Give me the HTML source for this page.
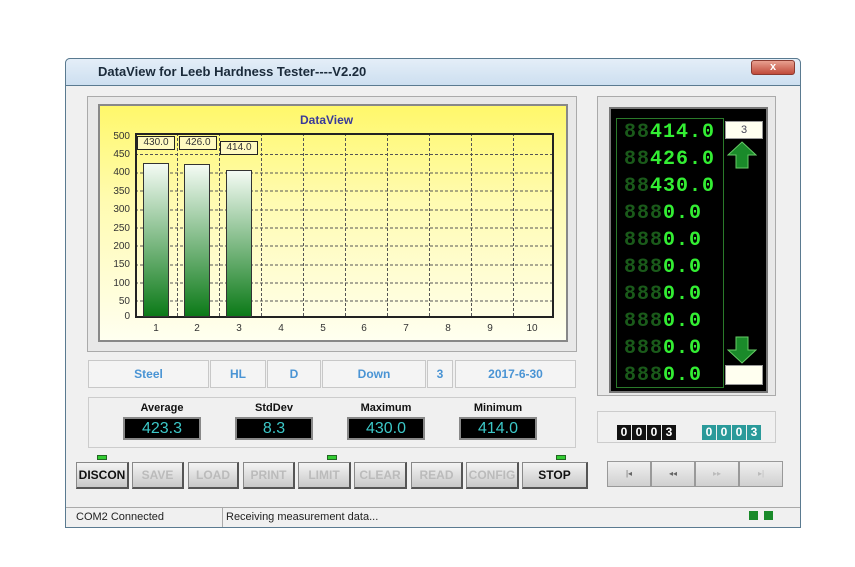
<!DOCTYPE html><html><head><style>
*{margin:0;padding:0;box-sizing:border-box}
body{width:855px;height:567px;background:#fff;position:relative;overflow:hidden;font-family:"Liberation Sans",sans-serif}
.a{position:absolute}
.win{left:65px;top:58px;width:736px;height:470px;border:1px solid #5a7a90;border-radius:5px 5px 0 0;background:#f0f0f0}
.tb{left:65px;top:58px;width:736px;height:28px;background:linear-gradient(#e4eef8,#cddff0);border-radius:5px 5px 0 0;border:1px solid #5a7a90}
.box{border:1px solid #c8c8c8;background:#f4f4f4;color:#4a94d4;font-size:12px;font-weight:bold;text-align:center;line-height:26px}
.lbl{font-size:11px;font-weight:bold;color:#111;text-align:center;width:78px}
.disp{background:#000;border:2px solid #888;color:#3cc8c8;font-size:16px;text-align:center;line-height:19px;width:78px;height:23px}
.btn{top:462px;height:27px;background:linear-gradient(#f4f4f4,#c8c8c8);border:1px solid #888;border-right:2px solid #555;border-bottom:2px solid #555;font-size:12px;font-weight:bold;text-align:center;line-height:24px;color:#bbb}
.led{width:10px;height:5px;background:#3c3;border:1px solid #262}
.row{left:624px;width:100px;height:24px;font-family:"Liberation Mono",monospace;font-weight:bold;font-size:20px;letter-spacing:1px;line-height:24px;white-space:nowrap}
.row span{color:#1a5a1a}.row b{color:#33ee33}
.yl{left:108px;width:22px;text-align:right;font-size:10px;color:#333}
.xl{top:323px;font-size:10px;color:#333;width:12px;text-align:center}
.nb{top:461px;height:26px;width:44px;background:linear-gradient(#f0f0f0,#d0d0d0);border:1px solid #999;font-size:8px;color:#666;text-align:center;line-height:24px}
.cd{display:inline-block;width:14px;height:15px;margin-right:1px;font-size:12px;font-weight:bold;text-align:center;line-height:15px}
</style></head><body>
<div class="a win"></div>
<div class="a tb"></div>
<div class="a" style="left:98px;top:64px;font-size:13px;font-weight:bold;color:#1a2a3a">DataView for Leeb Hardness Tester----V2.20</div>
<div class="a" style="left:751px;top:60px;width:44px;height:15px;background:linear-gradient(#e8a090,#c04a3a);border:1px solid #8a3a30;border-radius:3px;color:#fff;font-size:11px;font-weight:bold;text-align:center;line-height:13px">x</div>
<div class="a" style="left:87px;top:96px;width:490px;height:256px;border:1px solid #aaa;background:#e8e8e8"></div>
<div class="a" style="left:98px;top:104px;width:470px;height:238px;background:linear-gradient(#fff86a,#fffbb0 40%,#fffff0);border:2px solid #888"></div>
<div class="a" style="left:300px;top:113px;font-size:12px;font-weight:bold;color:#3a3a9a">DataView</div>
<svg class="a" style="left:135px;top:133px" width="419" height="185">
<g stroke="#555" stroke-dasharray="3,2" stroke-width="1">
<line x1="0" y1="21.5" x2="419" y2="21.5"/><line x1="0" y1="40" x2="419" y2="40"/><line x1="0" y1="58" x2="419" y2="58"/><line x1="0" y1="77" x2="419" y2="77"/><line x1="0" y1="95" x2="419" y2="95"/><line x1="0" y1="113" x2="419" y2="113"/><line x1="0" y1="132" x2="419" y2="132"/><line x1="0" y1="150" x2="419" y2="150"/><line x1="0" y1="168" x2="419" y2="168"/>
<line x1="42.5" y1="0" x2="42.5" y2="185"/><line x1="84.5" y1="0" x2="84.5" y2="185"/><line x1="126.5" y1="0" x2="126.5" y2="185"/><line x1="168.5" y1="0" x2="168.5" y2="185"/><line x1="210.5" y1="0" x2="210.5" y2="185"/><line x1="252.5" y1="0" x2="252.5" y2="185"/><line x1="294.5" y1="0" x2="294.5" y2="185"/><line x1="336.5" y1="0" x2="336.5" y2="185"/><line x1="378.5" y1="0" x2="378.5" y2="185"/>
</g><rect x="1" y="1" width="417" height="183" fill="none" stroke="#222" stroke-width="2"/></svg>
<div class="a" style="left:143px;top:163px;width:26px;height:154px;background:linear-gradient(#f4fbf4,#0c7a18);border:1px solid #333"></div>
<div class="a" style="left:184px;top:164px;width:26px;height:153px;background:linear-gradient(#f4fbf4,#0c7a18);border:1px solid #333"></div>
<div class="a" style="left:226px;top:170px;width:26px;height:147px;background:linear-gradient(#f4fbf4,#0c7a18);border:1px solid #333"></div>
<div class="a" style="left:137px;top:136px;width:38px;height:14px;border:1px solid #222;background:#fffac0;font-size:10px;text-align:center;line-height:12px;color:#333">430.0</div>
<div class="a" style="left:179px;top:136px;width:38px;height:14px;border:1px solid #222;background:#fffac0;font-size:10px;text-align:center;line-height:12px;color:#333">426.0</div>
<div class="a" style="left:220px;top:141px;width:38px;height:14px;border:1px solid #222;background:#fffac0;font-size:10px;text-align:center;line-height:12px;color:#333">414.0</div>
<div class="a yl" style="top:131px">500</div><div class="a yl" style="top:149px">450</div><div class="a yl" style="top:167px">400</div><div class="a yl" style="top:186px">350</div><div class="a yl" style="top:204px">300</div><div class="a yl" style="top:223px">250</div><div class="a yl" style="top:241px">200</div><div class="a yl" style="top:259px">150</div><div class="a yl" style="top:278px">100</div><div class="a yl" style="top:296px">50</div><div class="a yl" style="top:311px">0</div>
<div class="a xl" style="left:150px">1</div><div class="a xl" style="left:191px">2</div><div class="a xl" style="left:233px">3</div><div class="a xl" style="left:275px">4</div><div class="a xl" style="left:317px">5</div><div class="a xl" style="left:358px">6</div><div class="a xl" style="left:400px">7</div><div class="a xl" style="left:442px">8</div><div class="a xl" style="left:484px">9</div><div class="a xl" style="left:526px">10</div>
<div class="a box" style="left:88px;top:360px;width:121px;height:28px">Steel</div>
<div class="a box" style="left:210px;top:360px;width:56px;height:28px">HL</div>
<div class="a box" style="left:267px;top:360px;width:54px;height:28px">D</div>
<div class="a box" style="left:322px;top:360px;width:104px;height:28px">Down</div>
<div class="a box" style="left:427px;top:360px;width:26px;height:28px">3</div>
<div class="a box" style="left:455px;top:360px;width:121px;height:28px">2017-6-30</div>
<div class="a" style="left:88px;top:397px;width:488px;height:51px;border:1px solid #ccc;background:#f0f0f0"></div>
<div class="a lbl" style="left:123px;top:402px">Average</div><div class="a disp" style="left:123px;top:417px">423.3</div>
<div class="a lbl" style="left:235px;top:402px">StdDev</div><div class="a disp" style="left:235px;top:417px">8.3</div>
<div class="a lbl" style="left:347px;top:402px">Maximum</div><div class="a disp" style="left:347px;top:417px">430.0</div>
<div class="a lbl" style="left:459px;top:402px">Minimum</div><div class="a disp" style="left:459px;top:417px">414.0</div>
<div class="a led" style="left:97px;top:455px"></div><div class="a led" style="left:327px;top:455px"></div><div class="a led" style="left:556px;top:455px"></div>
<div class="a btn" style="left:76px;width:53px;color:#111">DISCON</div>
<div class="a btn" style="left:132px;width:52px">SAVE</div>
<div class="a btn" style="left:188px;width:51px">LOAD</div>
<div class="a btn" style="left:243px;width:52px">PRINT</div>
<div class="a btn" style="left:298px;width:53px">LIMIT</div>
<div class="a btn" style="left:354px;width:53px">CLEAR</div>
<div class="a btn" style="left:411px;width:52px">READ</div>
<div class="a btn" style="left:466px;width:53px">CONFIG</div>
<div class="a btn" style="left:522px;width:66px;color:#111">STOP</div>
<div class="a" style="left:66px;top:507px;width:734px;height:1px;background:#aaa"></div>
<div class="a" style="left:222px;top:508px;width:1px;height:19px;background:#aaa"></div>
<div class="a" style="left:76px;top:511px;font-size:11px;color:#222">COM2 Connected</div>
<div class="a" style="left:226px;top:511px;font-size:11px;color:#222">Receiving measurement data...</div>
<div class="a" style="left:749px;top:511px;width:9px;height:9px;background:#1a8a2a"></div>
<div class="a" style="left:764px;top:511px;width:9px;height:9px;background:#1a8a2a"></div>
<div class="a" style="left:597px;top:96px;width:179px;height:300px;border:1px solid #aaa;background:#e8e8e8"></div>
<div class="a" style="left:609px;top:107px;width:159px;height:286px;background:#000;border:2px solid #777"></div>
<div class="a" style="left:616px;top:118px;width:108px;height:270px;border:1px solid #2a7a2a"></div>
<div class="a row" style="top:121px"><span>88</span><b>414.0</b></div>
<div class="a row" style="top:148px"><span>88</span><b>426.0</b></div>
<div class="a row" style="top:175px"><span>88</span><b>430.0</b></div>
<div class="a row" style="top:202px"><span>888</span><b>0.0</b></div>
<div class="a row" style="top:229px"><span>888</span><b>0.0</b></div>
<div class="a row" style="top:256px"><span>888</span><b>0.0</b></div>
<div class="a row" style="top:283px"><span>888</span><b>0.0</b></div>
<div class="a row" style="top:310px"><span>888</span><b>0.0</b></div>
<div class="a row" style="top:337px"><span>888</span><b>0.0</b></div>
<div class="a row" style="top:364px"><span>888</span><b>0.0</b></div>
<div class="a" style="left:725px;top:121px;width:38px;height:18px;background:#fffff0;border:1px solid #999;font-size:11px;text-align:center;line-height:16px;color:#445">3</div>
<svg class="a" style="left:727px;top:141px" width="30" height="28"><path d="M15 1 L29 14 L21 14 L21 27 L9 27 L9 14 L1 14 Z" fill="#1a8a2a" stroke="#6c6" stroke-width="1"/></svg>
<svg class="a" style="left:727px;top:336px" width="30" height="28"><path d="M15 27 L29 14 L21 14 L21 1 L9 1 L9 14 L1 14 Z" fill="#1a8a2a" stroke="#6c6" stroke-width="1"/></svg>
<div class="a" style="left:725px;top:365px;width:38px;height:20px;background:#fffff0;border:1px solid #999"></div>
<div class="a" style="left:597px;top:411px;width:179px;height:32px;border:1px solid #ccc;background:#f0f0f0"></div>
<div class="a" style="left:617px;top:423px"><span class="cd" style="background:#111;color:#fff">0</span><span class="cd" style="background:#111;color:#fff">0</span><span class="cd" style="background:#111;color:#fff">0</span><span class="cd" style="background:#111;color:#fff">3</span></div>
<div class="a" style="left:702px;top:423px"><span class="cd" style="background:#2a9a9a;color:#fff">0</span><span class="cd" style="background:#2a9a9a;color:#fff">0</span><span class="cd" style="background:#2a9a9a;color:#fff">0</span><span class="cd" style="background:#2a9a9a;color:#fff">3</span></div>
<div class="a nb" style="left:607px">|◂</div><div class="a nb" style="left:651px">◂◂</div><div class="a nb" style="left:695px;color:#bbb">▸▸</div><div class="a nb" style="left:739px;color:#bbb">▸|</div>
</body></html>
